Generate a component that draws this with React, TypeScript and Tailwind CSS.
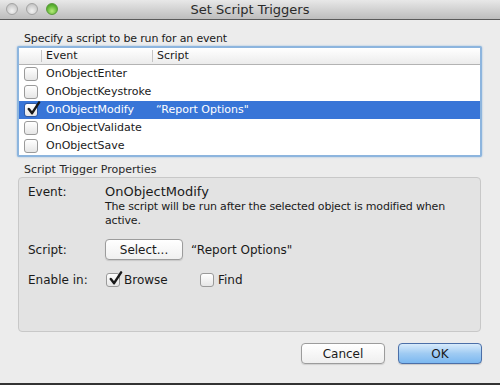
const rows = [
  { name: "OnObjectEnter", script: "", checked: false },
  { name: "OnObjectKeystroke", script: "", checked: false },
  { name: "OnObjectModify", script: "\u201CReport Options\"", checked: true },
  { name: "OnObjectValidate", script: "", checked: false },
  { name: "OnObjectSave", script: "", checked: false },
];

function Check({ checked, selected }: { checked: boolean; selected?: boolean }) {
  return (
    <div
      className={`relative w-[14px] h-[14px] rounded-[3px] border shrink-0 bg-gradient-to-b from-white to-[#e6e6e6] ${
        selected ? "border-[#2c56a0]" : "border-[#9a9a9a]"
      }`}
    >
      {checked && (
        <svg viewBox="0 0 16 16" className="absolute left-[1px] -top-[3px] w-[15px] h-[15px]">
          <path d="M3 8.5 L6.5 13 L14 1.5" fill="none" stroke="#1a1a1a" strokeWidth="2.6" strokeLinecap="round" strokeLinejoin="round" />
        </svg>
      )}
    </div>
  );
}

function Light({ green }: { green?: boolean }) {
  return (
    <div
      className={`w-[12px] h-[12px] rounded-full border ${
        green
          ? "border-[#5a9a3a] bg-[radial-gradient(circle_at_50%_70%,#b8ec7c,#5fb634_60%,#3e8b22)]"
          : "border-[#a3a3a3] bg-[radial-gradient(circle_at_50%_70%,#f2f2f2,#d0d0d0_60%,#b8b8b8)]"
      }`}
    />
  );
}

export default function App() {
  return (
    <div className="w-[500px] h-[385px] bg-[#333] overflow-hidden text-[#1a1a1a]" style={{ fontFamily: '"DejaVu Sans", sans-serif' }}>
      <div className="h-[383px] bg-[#ececec] flex flex-col">
        {/* Title bar */}
        <div className="relative h-[20px] shrink-0 bg-gradient-to-b from-[#e8e8e8] to-[#bdbdbd] border-b border-[#5a5a5a] flex items-center justify-center">
          <div className="absolute left-[6px] top-[3px] flex gap-[8px]">
            <Light />
            <Light />
            <Light green />
          </div>
          <span className="text-[13px] text-[#2a2a2a]">Set Script Triggers</span>
        </div>

        <div className="px-[17px] pt-[12px] flex flex-col">
          <div className="pl-[7px] text-[11px] tracking-[-0.15px] leading-[14px]">Specify a script to be run for an event</div>

          {/* List */}
          <div className="w-[465px] border-[2px] border-[#8db5de] rounded-[2px] bg-white shadow-[0_0_2px_#8db5de]">
            <div className="h-[17px] flex items-center text-[11px] bg-gradient-to-b from-white to-[#ececec] border-b border-[#b3b3b3]">
              <div className="w-[23px] h-[12px] border-r border-[#c5c5c5]" />
              <div className="w-[111px] pl-[4px] h-[12px] leading-[12px] border-r border-[#c5c5c5]">Event</div>
              <div className="pl-[4px] leading-[12px]">Script</div>
            </div>
            {rows.map((r) => (
              <div
                key={r.name}
                className={`h-[18px] flex items-center text-[11px] ${r.checked ? "bg-[#3875d7] text-white" : ""}`}
              >
                <div className="w-[22px] pl-[5px]">
                  <Check checked={r.checked} selected={r.checked} />
                </div>
                <div className="w-[111px] pl-[5px]">{r.name}</div>
                <div className="pl-[4px]">{r.script}</div>
              </div>
            ))}
          </div>

          <div className="pl-[7px] mt-[6px] text-[11px] leading-[13px] text-[#2a2a2a]">Script Trigger Properties</div>

          {/* Group box */}
          <div className="mt-[1px] ml-[1px] w-[463px] h-[155px] bg-[#e3e3e3] border border-[#c8c8c8] rounded-[4px] px-[9px] pt-[6px]">
            <div className="flex">
              <div className="w-[77px] text-[12px] leading-[16px]">Event:</div>
              <div className="flex-1">
                <div className="text-[13px] leading-[16px]">OnObjectModify</div>
                <div className="text-[11px] tracking-[-0.17px] leading-[14px]">
                  The script will be run after the selected object is modified when
                  <br />
                  active.
                </div>
              </div>
            </div>
            <div className="flex items-center mt-[11px]">
              <div className="w-[77px] text-[12px]">Script:</div>
              <button className="w-[78px] h-[21px] rounded-[4px] border border-[#9c9c9c] bg-gradient-to-b from-white to-[#f0f0f0] text-[12px] shadow-[0_1px_1px_rgba(0,0,0,0.12)]">
                Select...
              </button>
              <span className="ml-[8px] text-[12px]">{"\u201CReport Options\""}</span>
            </div>
            <div className="flex items-center mt-[11px]">
              <div className="w-[78px] text-[12px]">Enable in:</div>
              <Check checked />
              <span className="ml-[4px] text-[12px] w-[76px]">Browse</span>
              <Check checked={false} />
              <span className="ml-[4px] text-[12px]">Find</span>
            </div>
          </div>

          {/* Buttons */}
          <div className="flex justify-end gap-[13px] mt-[11px] pr-[1px]">
            <button className="w-[84px] h-[21px] rounded-[4px] border border-[#9c9c9c] bg-gradient-to-b from-white to-[#efefef] text-[12px] shadow-[0_1px_1px_rgba(0,0,0,0.12)]">
              Cancel
            </button>
            <button className="w-[84px] h-[21px] rounded-[4px] border border-[#4b6fa8] bg-gradient-to-b from-[#d8ebfb] via-[#9fcbf3] to-[#7bb8f0] text-[12px] shadow-[0_1px_1px_rgba(0,0,0,0.15)]">
              OK
            </button>
          </div>
        </div>
      </div>
    </div>
  );
}
